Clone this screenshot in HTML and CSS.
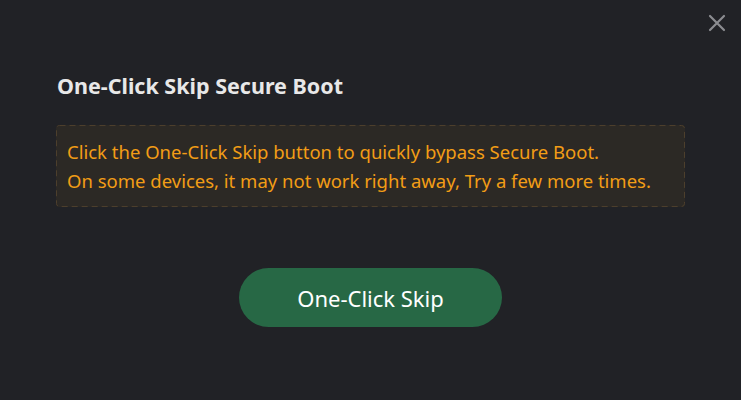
FILE: index.html
```html
<!DOCTYPE html>
<html lang="en">
<head>
    <meta charset="UTF-8">
    <title>One-Click Skip Secure Boot</title>
    <link rel="stylesheet" href="styles.css">
</head>
<body>
    <div class="dialog">
        <div class="topbar">
            <button class="close" aria-label="Close">
                <svg width="18" height="18" viewBox="0 0 18 18">
                    <path d="M2 2 L16 16 M16 2 L2 16" stroke="#8b8c90" stroke-width="2.2" stroke-linecap="round"/>
                </svg>
            </button>
        </div>
        <h1 class="title">One-Click Skip Secure Boot</h1>
        <div class="notice">
            <svg class="notice-border" width="100%" height="100%">
                <rect x="0.5" y="0.5" width="calc(100% - 1px)" height="calc(100% - 1px)" rx="3" fill="none" stroke="#4d3f2c" stroke-dasharray="6 4"/>
            </svg>
            <p>Click the One-Click Skip button to quickly bypass Secure Boot.</p>
            <p>On some devices, it may not work right away, Try a few more times.</p>
        </div>
        <div class="actions">
            <button class="skip-btn">One-Click Skip</button>
        </div>
    </div>
</body>
</html>
```

FILE: styles.css
```css
html, body {
    margin: 0;
    padding: 0;
    height: 100%;
}
body {
    background-color: #212226;
    font-family: "Noto Sans", "Noto Sans CJK SC", sans-serif;
    color: #e4e4e4;
}
.dialog {
    padding: 0 56px;
}
.topbar {
    display: flex;
    justify-content: flex-end;
    height: 42px;
    margin-right: -41px;
    padding-top: 14px;
    box-sizing: border-box;
}
.close {
    background: none;
    border: none;
    padding: 0;
    width: 18px;
    height: 18px;
    cursor: pointer;
}
.close svg {
    display: block;
}
.title {
    margin: 29px 0 0 1px;
    font-size: 21.5px;
    font-weight: bold;
    line-height: 30px;
    color: #e8e8e8;
}
.notice {
    position: relative;
    margin-top: 24px;
    border-radius: 3px;
    background-color: #2c2925;
    padding: 12px 11px;
    color: #f29d16;
    font-size: 18.5px;
    line-height: 29px;
}
/* dashed outline drawn over the box, longer dashes than css gives */
.notice-border {
    position: absolute;
    top: 0;
    left: 0;
    pointer-events: none;
}
.notice p {
    margin: 0;
    white-space: nowrap;
}
.actions {
    display: flex;
    justify-content: center;
    margin-top: 61px;
}
.skip-btn {
    width: 263px;
    height: 59px;
    border: none;
    border-radius: 30px;
    background-color: #276845;
    color: #ffffff;
    font-family: inherit;
    font-size: 22px;
    cursor: pointer;
}
```
